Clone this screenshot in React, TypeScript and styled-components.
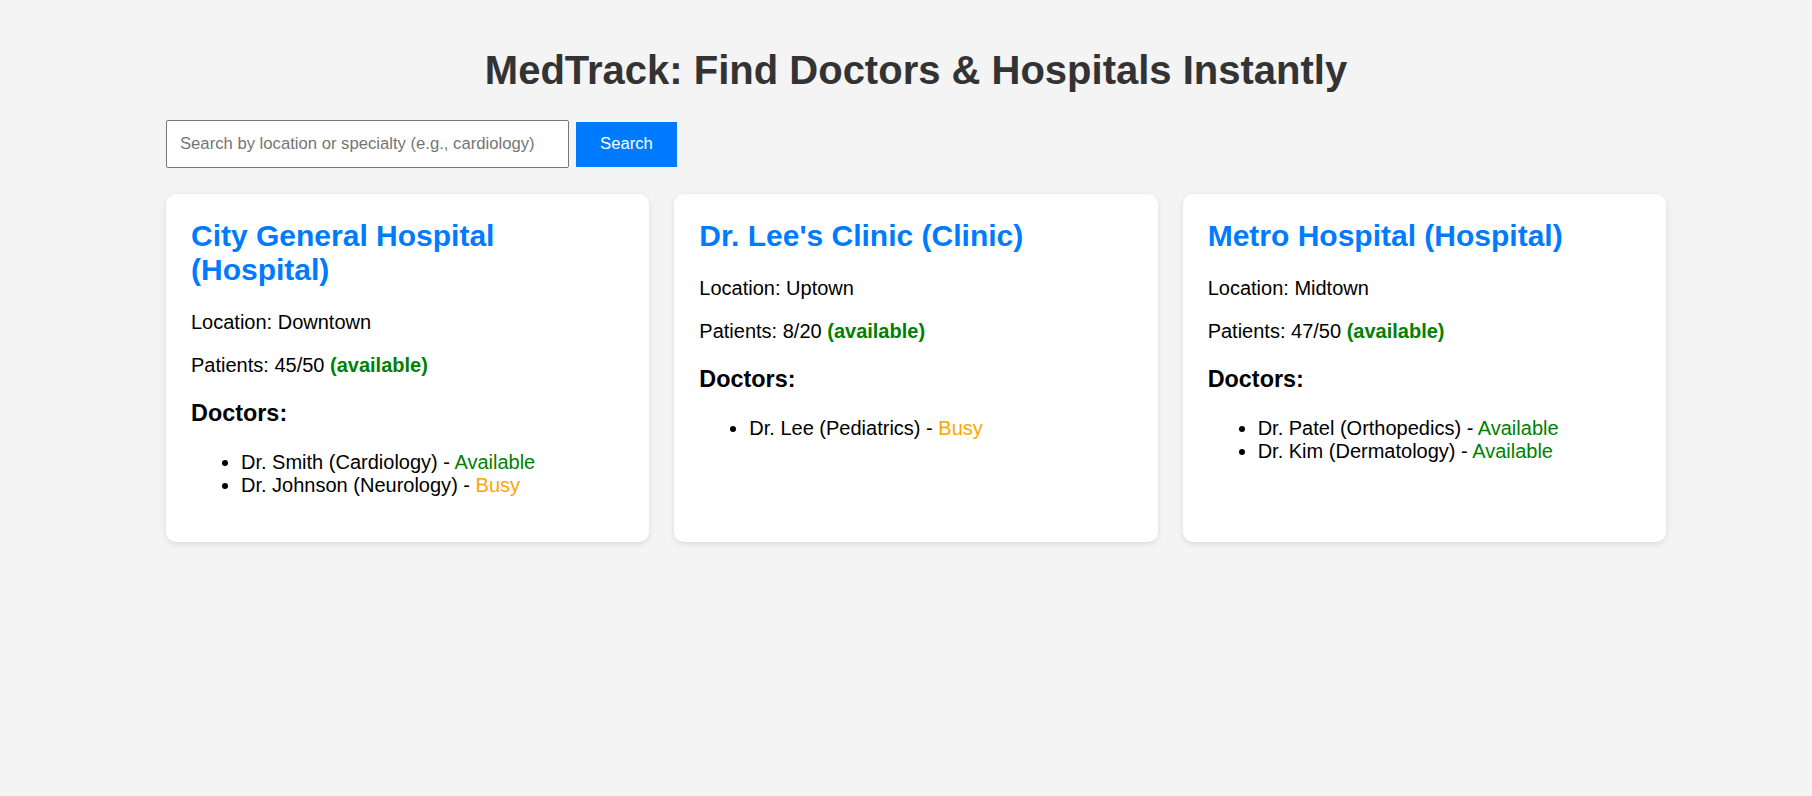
import React from "react";
import styled, { createGlobalStyle } from "styled-components";

const GlobalStyle = createGlobalStyle`
  html, body {
    margin: 0;
    padding: 0;
    background: #f4f4f4;
    font-family: "Liberation Sans", Arial, sans-serif;
  }
`;

const Page = styled.div`
  padding: 21px 0 20px 20px;
  font-family: "Liberation Sans", Arial, sans-serif;
  font-size: 20px;
  color: #000;
`;

const Container = styled.div`
  max-width: 1500px;
  margin: 0 auto;
`;

const Title = styled.h1`
  margin: 27px 0;
  font-size: 40px;
  font-weight: bold;
  line-height: normal;
  text-align: center;
  color: #333;
`;

const SearchBar = styled.form`
  display: flex;
  align-items: center;
  gap: 7px;
  margin-bottom: 26px;
`;

const SearchInput = styled.input`
  box-sizing: border-box;
  width: 403px;
  height: 48px;
  padding: 0 13px;
  border: 1px solid #767676;
  border-radius: 2px;
  background: #fff;
  font-family: "Liberation Sans", Arial, sans-serif;
  font-size: 16.67px;
  color: #000;
  outline: none;
  &::placeholder {
    color: #757575;
  }
`;

const SearchButton = styled.button`
  box-sizing: border-box;
  width: 101px;
  height: 45px;
  border: none;
  border-radius: 0;
  background: #007bff;
  color: #fff;
  font-family: "Liberation Sans", Arial, sans-serif;
  font-size: 16.67px;
  cursor: pointer;
`;

const Grid = styled.div`
  display: grid;
  grid-template-columns: repeat(3, 1fr);
  gap: 25px;
`;

const Card = styled.div`
  background: #fff;
  border-radius: 10px;
  padding: 25px;
  box-shadow: 0 2px 6px rgba(0, 0, 0, 0.1);
`;

const CardTitle = styled.h2`
  margin: 0 0 24px;
  font-size: 30px;
  font-weight: bold;
  line-height: normal;
  color: #007bff;
`;

const Info = styled.p`
  margin: 20px 0;
  line-height: normal;
`;

const Status = styled.span<{ $bold?: boolean; $busy?: boolean }>`
  color: ${(p) => (p.$busy ? "#ffa500" : "#008000")};
  font-weight: ${(p) => (p.$bold ? "bold" : "normal")};
`;

const SectionTitle = styled.h3`
  margin: 23.4px 0;
  font-size: 23.4px;
  font-weight: bold;
  line-height: normal;
`;

const DoctorList = styled.ul`
  margin: 20px 0;
  padding-left: 50px;
  line-height: normal;
`;

const Doctor = styled.li``;

type Doc = { name: string; specialty: string; available: boolean };
type Facility = {
  name: string;
  type: string;
  location: string;
  patients: number;
  capacity: number;
  doctors: Doc[];
};

const facilities: Facility[] = [
  {
    name: "City General Hospital",
    type: "Hospital",
    location: "Downtown",
    patients: 45,
    capacity: 50,
    doctors: [
      { name: "Dr. Smith", specialty: "Cardiology", available: true },
      { name: "Dr. Johnson", specialty: "Neurology", available: false },
    ],
  },
  {
    name: "Dr. Lee's Clinic",
    type: "Clinic",
    location: "Uptown",
    patients: 8,
    capacity: 20,
    doctors: [{ name: "Dr. Lee", specialty: "Pediatrics", available: false }],
  },
  {
    name: "Metro Hospital",
    type: "Hospital",
    location: "Midtown",
    patients: 47,
    capacity: 50,
    doctors: [
      { name: "Dr. Patel", specialty: "Orthopedics", available: true },
      { name: "Dr. Kim", specialty: "Dermatology", available: true },
    ],
  },
];

export default function App() {
  return (
    <Page>
      <GlobalStyle />
      <Container>
        <Title>MedTrack: Find Doctors &amp; Hospitals Instantly</Title>
        <SearchBar onSubmit={(e) => e.preventDefault()}>
          <SearchInput
            type="text"
            placeholder="Search by location or specialty (e.g., cardiology)"
          />
          <SearchButton type="submit">Search</SearchButton>
        </SearchBar>
        <Grid>
          {facilities.map((f) => (
            <Card key={f.name}>
              <CardTitle>
                {f.name} ({f.type})
              </CardTitle>
              <Info>Location: {f.location}</Info>
              <Info>
                Patients: {f.patients}/{f.capacity}{" "}
                <Status $bold>
                  ({f.patients < f.capacity ? "available" : "full"})
                </Status>
              </Info>
              <SectionTitle>Doctors:</SectionTitle>
              <DoctorList>
                {f.doctors.map((d) => (
                  <Doctor key={d.name}>
                    {d.name} ({d.specialty}) -{" "}
                    <Status $busy={!d.available}>
                      {d.available ? "Available" : "Busy"}
                    </Status>
                  </Doctor>
                ))}
              </DoctorList>
            </Card>
          ))}
        </Grid>
      </Container>
    </Page>
  );
}
